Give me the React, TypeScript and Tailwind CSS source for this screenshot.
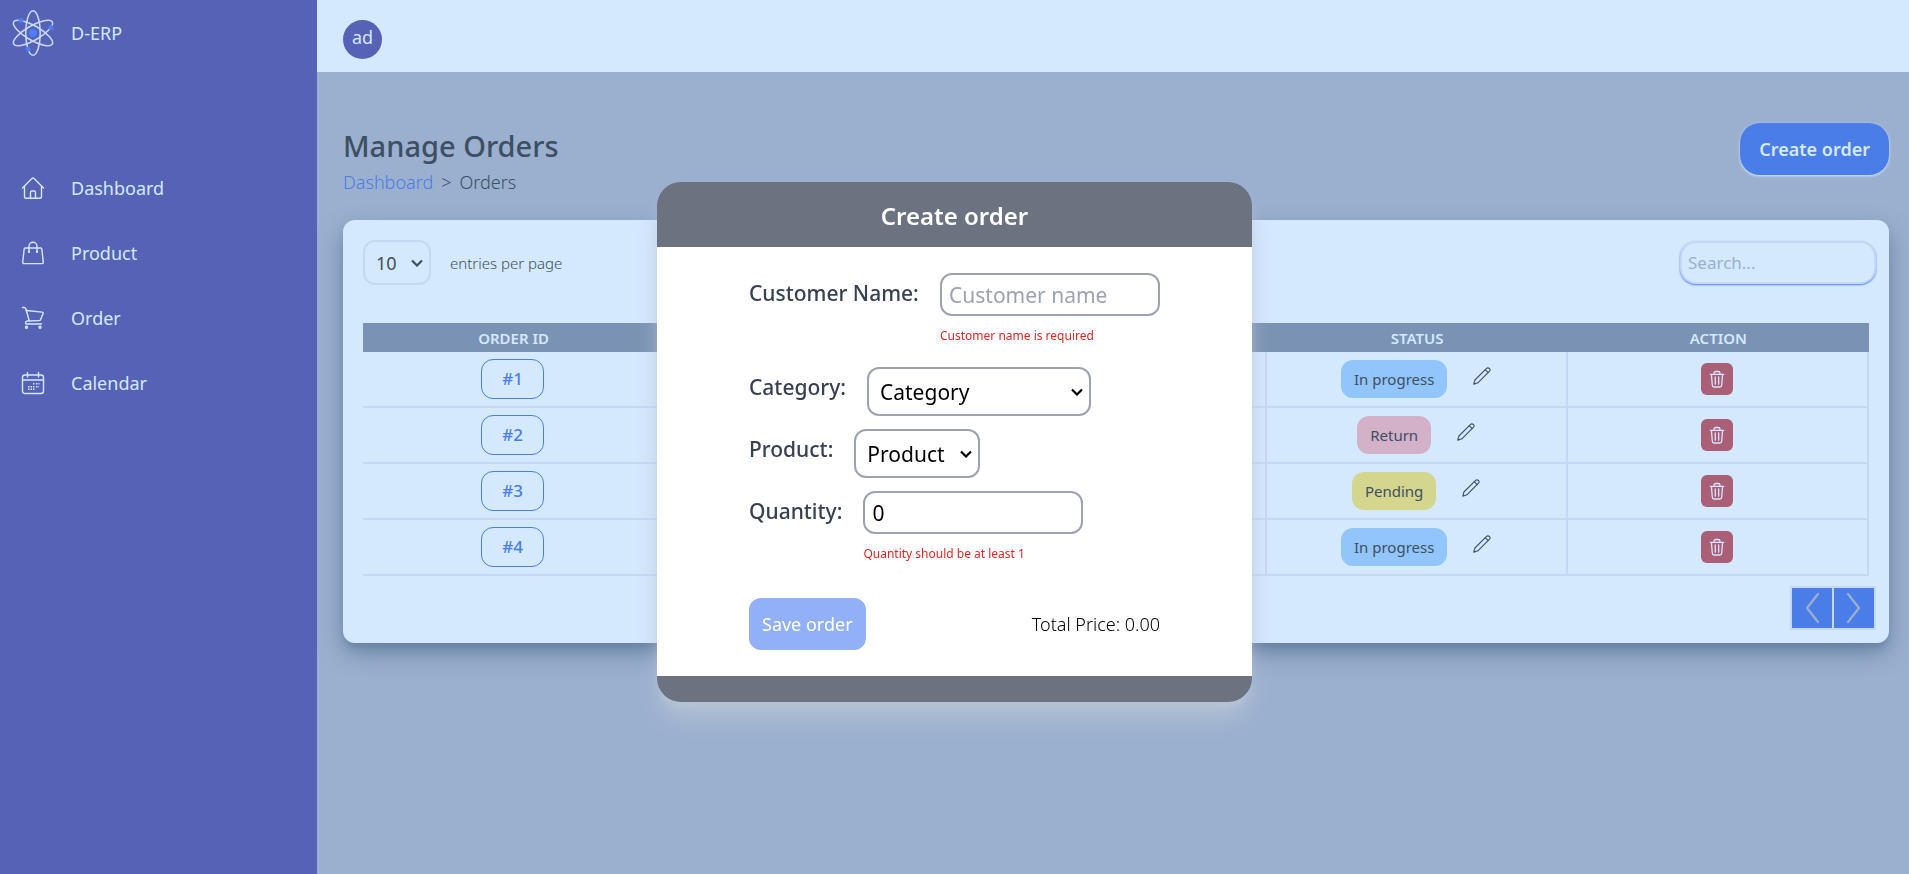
import React, { useState } from 'react';

const stroke = {
  fill: 'none',
  stroke: 'currentColor',
  strokeLinecap: 'round' as const,
  strokeLinejoin: 'round' as const,
};

function AtomLogo() {
  return (
    <svg viewBox="0 0 48 48" className="size-12" aria-hidden="true">
      <g fill="none" stroke="#c3dbf8" strokeWidth="1.5">
        <ellipse cx="24" cy="24" rx="7.2" ry="22.3" />
        <ellipse cx="24" cy="24" rx="7.2" ry="22.3" transform="rotate(60 24 24)" />
        <ellipse cx="24" cy="24" rx="7.2" ry="22.3" transform="rotate(-60 24 24)" />
      </g>
      <g fill="#4f7dff">
        <circle cx="24" cy="24" r="4" />
        <circle cx="12" cy="11.5" r="2.5" />
        <circle cx="42" cy="18.5" r="2.5" />
        <circle cx="19" cy="40" r="2.5" />
      </g>
    </svg>
  );
}

function HomeIcon() {
  return (
    <svg viewBox="0 0 24 24" className="size-6" strokeWidth="1.4" {...stroke} aria-hidden="true">
      <path d="M1.5 12 10.9 2.5a1.6 1.6 0 0 1 2.2 0L22.5 12" />
      <path d="M3.5 10.2v10.6a1.5 1.5 0 0 0 1.5 1.5h14a1.5 1.5 0 0 0 1.5-1.5V10.2" />
      <path d="M9.5 22v-5.5a1.5 1.5 0 0 1 1.5-1.5h2a1.5 1.5 0 0 1 1.5 1.5V22" />
    </svg>
  );
}

function BagIcon() {
  return (
    <svg viewBox="0 0 24 24" className="size-6" strokeWidth="1.4" {...stroke} aria-hidden="true">
      <path d="M4.2 7h15.6a1 1 0 0 1 1 .9l1.5 13.3a1.3 1.3 0 0 1-1.3 1.4H3a1.3 1.3 0 0 1-1.3-1.4L3.2 7.9a1 1 0 0 1 1-.9z" />
      <path d="M8 10.8V5.2a4 4 0 0 1 8 0v5.6" />
      <circle cx="8" cy="10.8" r=".5" />
      <circle cx="16" cy="10.8" r=".5" />
    </svg>
  );
}

function CartIcon() {
  return (
    <svg viewBox="0 0 24 24" className="size-6" strokeWidth="1.4" {...stroke} aria-hidden="true">
      <path d="M1.5 1.5h1.8a1.5 1.5 0 0 1 1.4 1l3.5 12" />
      <path d="M5.3 4.5l15.9 1.6a1 1 0 0 1 .9 1.4l-2.6 6.2a1.5 1.5 0 0 1-1.3.9L6.8 15a2 2 0 0 0-2.3 2 1 1 0 0 0 1 1h15" />
      <circle cx="5.5" cy="21.2" r="1" />
      <circle cx="19" cy="21.2" r="1" />
    </svg>
  );
}

function CalendarIcon() {
  return (
    <svg viewBox="0 0 24 24" className="size-6" strokeWidth="1.4" {...stroke} aria-hidden="true">
      <rect x="1.5" y="4" width="21" height="18.5" rx="2.5" />
      <path d="M1.5 9h21M6.5 1.5V6M17.5 1.5V6" />
      <path
        d="M12 12.8h1.5M15 12.8h1.5M17.5 12.8h1M7 15.8h1.5M9.5 15.8h1.5M12 15.8h1.5M15 15.8h1.5M17.5 15.8h.6M7 18.3h1.5M9.5 18.3h1.5M12 18.3h1.5"
        strokeLinecap="butt"
      />
    </svg>
  );
}

function PencilIcon() {
  return (
    <svg viewBox="0 0 18 18" className="size-[18px]" strokeWidth="1.1" {...stroke} aria-hidden="true">
      <path d="M.8 17.2 1.9 13 13.6 1.4a1.9 1.9 0 0 1 2.7 0l.2.2a1.9 1.9 0 0 1 0 2.6L4.900 15.800.8 17.200z" />
      <path d="M12.300 2.700l2.900 2.900" />
    </svg>
  );
}

function TrashIcon() {
  return (
    <svg viewBox="0 0 18 18" className="size-[18px]" strokeWidth="1.3" {...stroke} aria-hidden="true">
      <path d="M2.3 4.3h13.4M3.4 4.3l.9 11a1.8 1.8 0 0 0 1.8 1.7h5.8a1.8 1.8 0 0 0 1.8-1.7l.9-11" />
      <path d="M6 4.1V3.3A1.8 1.8 0 0 1 7.8 1.5h2.4A1.8 1.8 0 0 1 12 3.3v.8M7.3 6.8v7.4M10.7 6.8v7.4" />
    </svg>
  );
}

function Chevron({ d }: { d: string }) {
  return (
    <svg viewBox="0 0 40 40" className="size-10" strokeWidth="2.2" {...stroke} aria-hidden="true">
      <path d={d} />
    </svg>
  );
}

function Select({ id, option, className }: { id: string; option: string; className: string }) {
  return (
    <div className="relative">
      <select id={id} className={`appearance-none rounded-xl border-2 pr-7 pl-[11px] ${className}`}>
        <option>{option}</option>
      </select>
      <svg
        viewBox="0 0 12 8"
        className="pointer-events-none absolute inset-y-0 right-2 my-auto h-2 w-3"
        fill="none"
        stroke="currentColor"
        strokeWidth="2.2"
        aria-hidden="true"
      >
        <path d="M1 1.5l5 5 5-5" />
      </svg>
    </div>
  );
}

const navItems = [
  { label: 'Dashboard', icon: <HomeIcon /> },
  { label: 'Product', icon: <BagIcon /> },
  { label: 'Order', icon: <CartIcon /> },
  { label: 'Calendar', icon: <CalendarIcon /> },
];

const statusStyles = {
  'In progress': 'bg-[#93c5fd]',
  Return: 'bg-[#d2b1c9]',
  Pending: 'bg-[#d4d68e]',
};

const orders: { id: number; customer: string; total: string; status: keyof typeof statusStyles }[] = [
  { id: 1, customer: '', total: '', status: 'In progress' },
  { id: 2, customer: '', total: '', status: 'Return' },
  { id: 3, customer: '', total: '', status: 'Pending' },
  { id: 4, customer: '', total: '', status: 'In progress' },
];

function Sidebar() {
  return (
    <aside className="w-[317px] shrink-0 bg-[#5562b5] text-[#d4e8fe]">
      <div className="flex items-center gap-[14px] pt-[9px] pl-[9px]">
        <AtomLogo />
        <span className="text-[18px] leading-7">D-ERP</span>
      </div>
      <nav className="mt-[117px] flex flex-col gap-[37px] pl-[21px]">
        {navItems.map((item) => (
          <a key={item.label} href="#" className="flex items-center gap-[26px] text-[18px] leading-7">
            {item.icon}
            {item.label}
          </a>
        ))}
      </nav>
    </aside>
  );
}

function OrdersTable() {
  const cell = 'border-r-2 border-b-2 border-[#c5d8f3] p-0';
  return (
    <table className="w-full table-fixed border-separate border-spacing-0 text-center">
      <thead>
        <tr className="h-[29px] bg-[#7a92b3] text-[15px] leading-5 text-[#d4e8fe]">
          <th className="p-0 font-semibold">ORDER ID</th>
          <th className="p-0 font-semibold">CUSTOMER</th>
          <th className="p-0 font-semibold">TOTAL</th>
          <th className="p-0 font-semibold">STATUS</th>
          <th className="p-0 font-semibold">ACTION</th>
        </tr>
      </thead>
      <tbody>
        {orders.map((order) => (
          <tr key={order.id} className="h-14">
            <td className={cell}>
              <a
                href="#"
                className="inline-block rounded-xl border border-[#4a7de8] px-5 py-[7px] text-[17px] leading-6 font-medium text-[#4a7de8]"
              >
                #{order.id}
              </a>
            </td>
            <td className={cell}>{order.customer}</td>
            <td className={cell}>{order.total}</td>
            <td className={cell}>
              <div className="flex items-center justify-center gap-[26px] text-[#3d4f63]">
                <span
                  className={`rounded-xl px-[13px] py-[9px] text-[15px] leading-5 ${statusStyles[order.status]}`}
                >
                  {order.status}
                </span>
                <button type="button" aria-label={`Edit status of order ${order.id}`} className="pb-[6px]">
                  <PencilIcon />
                </button>
              </div>
            </td>
            <td className={cell}>
              <button
                type="button"
                aria-label={`Delete order ${order.id}`}
                className="inline-flex size-8 items-center justify-center rounded-md bg-[#aa5f77] align-middle text-[#d4e8fe]"
              >
                <TrashIcon />
              </button>
            </td>
          </tr>
        ))}
      </tbody>
    </table>
  );
}

function CreateOrderDialog() {
  const [quantity, setQuantity] = useState('0');
  const label = 'text-[21px] leading-10 font-medium text-[#374151]';
  const input = 'block h-[43px] w-[220px] rounded-xl border-2 border-[#9ca3af] bg-white px-[7px] text-[21px] leading-7';
  const error = 'mt-3 text-[12px] leading-4 text-[#dc2626]';
  return (
    <div className="fixed inset-0 flex items-center justify-center pt-[10px]">
      <div
        role="dialog"
        aria-labelledby="dialog-title"
        className="w-[595px] overflow-hidden rounded-3xl bg-[#6b7280] text-black shadow-[0_20px_25px_-5px_#b4c2d4,0_8px_10px_-6px_#d1d5db]"
      >
        <h2
          id="dialog-title"
          className="pt-[19px] pb-[17px] text-center text-[24px] leading-[29px] font-semibold text-white"
        >
          Create order
        </h2>
        <form className="bg-white px-[92px] pt-[26px] pb-[26px]" onSubmit={(e) => e.preventDefault()}>
          <div className="flex h-[94px] items-start justify-between">
            <label htmlFor="customer" className={label}>
              Customer Name:
            </label>
            <div>
              <input
                id="customer"
                type="text"
                placeholder="Customer name"
                className={`placeholder:text-[#9ca3af] ${input}`}
              />
              <p className={error}>Customer name is required</p>
            </div>
          </div>
          <div className="flex h-[62px] items-start gap-[21px]">
            <label htmlFor="category" className={label}>
              Category:
            </label>
            <Select
              id="category"
              option="Category"
              className="h-[49px] w-[224px] border-[#9ca3af] bg-white text-[21px] leading-7"
            />
          </div>
          <div className="flex h-[62px] items-start gap-[21px]">
            <label htmlFor="product" className={label}>
              Product:
            </label>
            <Select
              id="product"
              option="Product"
              className="h-[49px] w-[126px] border-[#9ca3af] bg-white text-[21px] leading-7"
            />
          </div>
          <div className="flex h-[107px] items-start gap-[21px]">
            <label htmlFor="quantity" className={label}>
              Quantity:
            </label>
            <div>
              <input
                id="quantity"
                type="number"
                value={quantity}
                onChange={(e) => setQuantity(e.target.value)}
                className={input}
              />
              <p className={error}>Quantity should be at least 1</p>
            </div>
          </div>
          <div className="flex items-center justify-between text-[18px] leading-7">
            <button type="submit" className="rounded-xl bg-[#92b0f5] px-[13px] py-3 text-white">
              Save order
            </button>
            <span className="font-light">Total Price: 0.00</span>
          </div>
        </form>
        <div className="h-[26px]" />
      </div>
    </div>
  );
}

export default function App() {
  return (
    <div className="flex min-h-screen bg-[#9bb0cf] font-['Noto_Sans','Open_Sans',sans-serif] text-[#3d4f63]">
      <Sidebar />
      <div className="min-w-0 flex-1">
        <header className="h-[72px] bg-[#d4e8fe] pt-5 pl-[26px]">
          <div className="flex size-[39px] items-start justify-center rounded-full bg-[#5562b5] pt-[3px] text-[18px] leading-7 text-[#d4e8fe]">
            ad
          </div>
        </header>
        <main className="pt-[51px] pr-5 pb-5 pl-[26px]">
          <div className="flex h-[97px] items-start justify-between">
            <div className="pt-[5px]">
              <h1 className="text-[29px] leading-9 font-medium">Manage Orders</h1>
              <p className="flex gap-2 text-[18px] leading-9 font-light">
                <a href="#" className="text-[#4a7de8]">
                  Dashboard
                </a>
                <span>&gt;</span>
                <span>Orders</span>
              </p>
            </div>
            <button
              type="button"
              className="rounded-[20px] bg-[#4a7de8] px-[19px] py-3 text-[18px] leading-7 font-semibold text-[#d4e8fe] shadow-[0_1px_3px_#d4e8fe]"
            >
              Create order
            </button>
          </div>
          <section className="rounded-xl bg-[#d4e8fe] px-5 pt-5 pb-[13px] shadow-[0_10px_25px_#6a84a5,0_8px_10px_-6px_#5a7393]">
            <div className="-mr-[7px] flex items-center justify-between">
              <div className="flex items-center gap-[19px]">
                <Select
                  id="entries"
                  option="10"
                  className="h-[45px] w-[68px] border-[#c5d8f3] bg-[#d4e8fe] text-[18px] leading-6"
                />
                <label htmlFor="entries" className="text-[15px] leading-6 font-light">
                  entries per page
                </label>
              </div>
              <input
                type="search"
                aria-label="Search orders"
                placeholder="Search..."
                className="h-[43px] w-[196px] rounded-2xl border-2 border-[#c5d8f3] bg-[#d4e8fe] px-[6px] text-[17px] shadow-[0_1px_2px_#4a7de8] placeholder:text-[#9bb0cf]"
              />
            </div>
            <div className="mt-[38px]">
              <OrdersTable />
            </div>
            <div className="-mr-[7px] mt-[10px] flex justify-end">
              <div className="flex border-2 border-[#c5d8f3] bg-[#4a7de8] text-[#9bb0cf]">
                <button type="button" aria-label="Previous page" className="border-r-2 border-[#c5d8f3]">
                  <Chevron d="M26 6 15 20 26 34" />
                </button>
                <button type="button" aria-label="Next page">
                  <Chevron d="M14 6 25 20 14 34" />
                </button>
              </div>
            </div>
          </section>
        </main>
      </div>
      <CreateOrderDialog />
    </div>
  );
}
